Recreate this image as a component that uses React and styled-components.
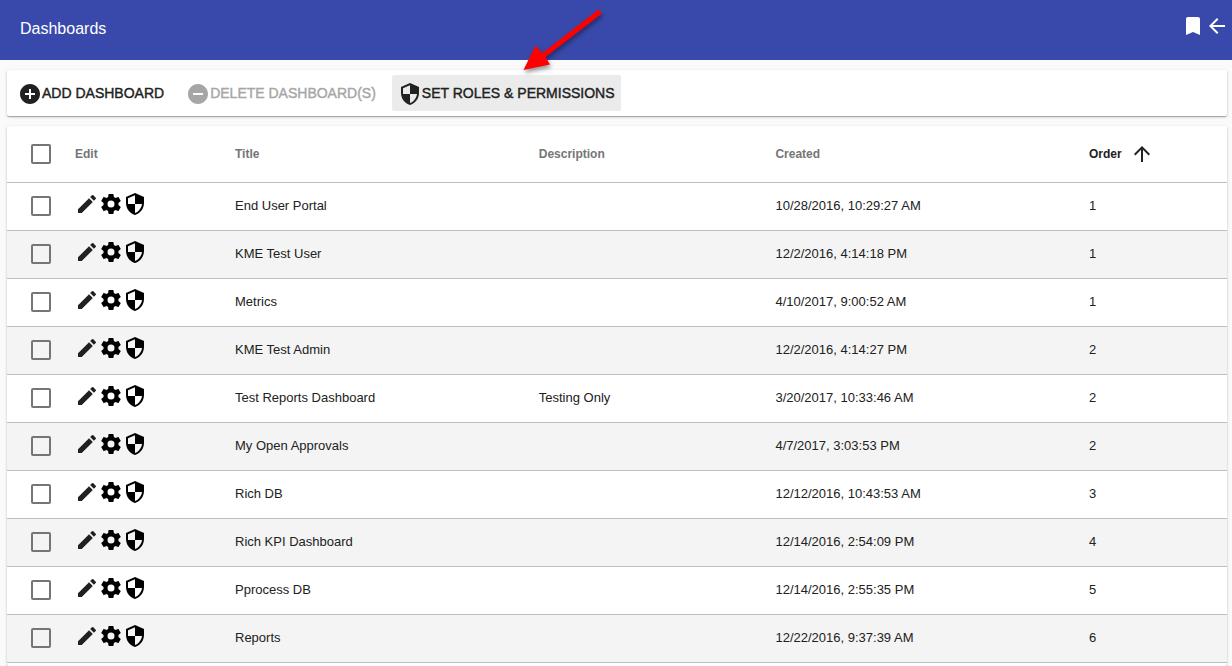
import React from 'react';
import styled, { createGlobalStyle } from 'styled-components';
import {
  MdAddCircle,
  MdArrowBack,
  MdArrowUpward,
  MdBookmark,
  MdEdit,
  MdRemoveCircle,
} from 'react-icons/md';

const dashboards = [
  { title: 'End User Portal', description: '', created: '10/28/2016, 10:29:27 AM', order: 1 },
  { title: 'KME Test User', description: '', created: '12/2/2016, 4:14:18 PM', order: 1 },
  { title: 'Metrics', description: '', created: '4/10/2017, 9:00:52 AM', order: 1 },
  { title: 'KME Test Admin', description: '', created: '12/2/2016, 4:14:27 PM', order: 2 },
  { title: 'Test Reports Dashboard', description: 'Testing Only', created: '3/20/2017, 10:33:46 AM', order: 2 },
  { title: 'My Open Approvals', description: '', created: '4/7/2017, 3:03:53 PM', order: 2 },
  { title: 'Rich DB', description: '', created: '12/12/2016, 10:43:53 AM', order: 3 },
  { title: 'Rich KPI Dashboard', description: '', created: '12/14/2016, 2:54:09 PM', order: 4 },
  { title: 'Pprocess DB', description: '', created: '12/14/2016, 2:55:35 PM', order: 5 },
  { title: 'Reports', description: '', created: '12/22/2016, 9:37:39 AM', order: 6 },
];

function ShieldIcon() {
  return (
    <svg viewBox="0 0 24 24" fill="currentColor" aria-hidden="true">
      <path d="M12 1L3 5v6c0 5.55 3.84 10.74 9 12 5.16-1.26 9-6.45 9-12V5l-9-4zm0 10.99h7c-.53 4.12-3.28 7.79-7 8.94V12H5V6.3l7-3.11v8.8z" />
    </svg>
  );
}

function GearIcon() {
  return (
    <svg viewBox="0 0 24 24" fill="currentColor" aria-hidden="true">
      <path d="M12 15.5A3.5 3.5 0 0 1 8.5 12 3.5 3.5 0 0 1 12 8.5a3.5 3.5 0 0 1 3.5 3.5 3.5 3.5 0 0 1-3.5 3.5m7.43-2.53c.04-.32.07-.64.07-.97s-.03-.66-.07-1l2.11-1.63c.19-.15.24-.42.12-.64l-2-3.46c-.12-.22-.39-.31-.61-.22l-2.49 1c-.52-.39-1.06-.73-1.69-.98l-.37-2.65A.506.506 0 0 0 14 2h-4c-.25 0-.46.18-.5.42l-.37 2.65c-.63.25-1.17.59-1.69.98l-2.49-1c-.22-.09-.49 0-.61.22l-2 3.46c-.13.22-.07.49.12.64L4.57 11c-.04.34-.07.67-.07 1s.03.65.07.97l-2.11 1.66c-.19.15-.25.42-.12.64l2 3.46c.12.22.39.3.61.22l2.49-1.01c.52.4 1.06.74 1.69.99l.37 2.65c.04.24.25.42.5.42h4c.25 0 .46-.18.5-.42l.37-2.65c.63-.26 1.17-.59 1.69-.99l2.49 1.01c.22.08.49 0 .61-.22l2-3.46c.12-.22.07-.49-.12-.64z" />
    </svg>
  );
}

function App() {
  return (
    <Page>
      <GlobalStyle />
      <Header>
        <h1>Dashboards</h1>
        <div className="header__actions">
          <IconButton aria-label="Bookmark">
            <MdBookmark />
          </IconButton>
          <IconButton aria-label="Back">
            <MdArrowBack />
          </IconButton>
        </div>
      </Header>

      <Content>
        <Toolbar>
          <ToolbarButton>
            <MdAddCircle />
            <span>ADD DASHBOARD</span>
          </ToolbarButton>
          <ToolbarButton disabled>
            <MdRemoveCircle />
            <span>DELETE DASHBOARD(S)</span>
          </ToolbarButton>
          <ToolbarButton $active>
            <ShieldIcon />
            <span>SET ROLES &amp; PERMISSIONS</span>
            <Pointer viewBox="0 0 90 72" aria-hidden="true">
              <path d="M78.500 3.500L22.500 47L15.500 39.500L3.500 64L30 58.500L25.500 51L82 7.500z" />
            </Pointer>
          </ToolbarButton>
        </Toolbar>

        <TableCard>
          <Table>
            <thead>
              <tr>
                <HeadCell $width="68px">
                  <Checkbox type="checkbox" aria-label="Select all" />
                </HeadCell>
                <HeadCell $width="160px">Edit</HeadCell>
                <HeadCell $width="24.9%">Title</HeadCell>
                <HeadCell $width="19.4%">Description</HeadCell>
                <HeadCell $width="25.7%">Created</HeadCell>
                <HeadCell $sorted aria-sort="ascending">
                  <div className="sort">
                    Order
                    <MdArrowUpward />
                  </div>
                </HeadCell>
              </tr>
            </thead>
            <tbody>
              {dashboards.map((item) => (
                <Row key={item.title}>
                  <Cell>
                    <Checkbox type="checkbox" aria-label={`Select ${item.title}`} />
                  </Cell>
                  <Cell>
                    <RowActions>
                      <IconButton $soft aria-label="Edit">
                        <MdEdit />
                      </IconButton>
                      <IconButton aria-label="Settings">
                        <GearIcon />
                      </IconButton>
                      <IconButton aria-label="Permissions">
                        <ShieldIcon />
                      </IconButton>
                    </RowActions>
                  </Cell>
                  <Cell>{item.title}</Cell>
                  <Cell>{item.description}</Cell>
                  <Cell>{item.created}</Cell>
                  <Cell>{item.order}</Cell>
                </Row>
              ))}
            </tbody>
          </Table>
        </TableCard>
      </Content>
    </Page>
  );
}

export default App;

const GlobalStyle = createGlobalStyle`
  * {
    box-sizing: border-box;
  }
  body {
    margin: 0;
    background: #fafafa;
    color: #212121;
    font-family: 'Liberation Sans', Arial, sans-serif;
  }
  button {
    border: 0;
    background: none;
    color: inherit;
    font-family: inherit;
    cursor: pointer;
  }
  svg {
    display: block;
    flex: none;
    width: 24px;
    height: 24px;
  }
`;

const Page = styled.div`
  display: flex;
  flex-direction: column;
  min-height: 100vh;
`;

const Header = styled.header`
  display: flex;
  align-items: center;
  justify-content: space-between;
  height: 60px;
  padding: 0 3px 2px 20px;
  background: #3949ab;
  color: #fff;
  h1 {
    margin: 0;
    font-size: 16px;
    font-weight: 400;
    line-height: 24px;
  }
  .header__actions {
    display: flex;
    padding-bottom: 6px;
  }
`;

const IconButton = styled.button`
  padding: 0;
  width: 24px;
  height: 24px;
  && {
    color: ${({ $soft }) => ($soft ? '#212121' : 'inherit')};
  }
`;

const Content = styled.main`
  display: flex;
  flex: 1;
  flex-direction: column;
  gap: 10px;
  padding: 10px 5px 0 7px;
`;

const Card = styled.section`
  border-radius: 2px;
  background: #fff;
  box-shadow: 0 1px 3px rgba(0, 0, 0, 0.2), 0 1px 1px rgba(0, 0, 0, 0.14),
    0 2px 1px -1px rgba(0, 0, 0, 0.12);
`;

const Toolbar = styled(Card)`
  display: flex;
  gap: 10px;
  padding: 5px;
`;

const ToolbarButton = styled.button`
  position: relative;
  display: flex;
  align-items: center;
  height: 36px;
  padding: 0 6px;
  border-radius: 2px;
  background: ${({ $active }) => ($active ? '#ebebeb' : 'transparent')};
  font-size: 14px;
  line-height: 36px;
  white-space: nowrap;
  -webkit-text-stroke: 0.4px currentColor;
  &:disabled {
    color: #a6a6a6;
    cursor: default;
  }
  svg {
    margin-top: 2px;
  }
`;

// red callout arrow, lies over the header and the toolbar
const Pointer = styled.svg`
  && {
    position: absolute;
    left: 128px;
    bottom: 33px;
    width: 90px;
    height: 72px;
    margin: 0;
  }
  fill: #fe0000;
  filter: drop-shadow(1px 3px 2px rgba(0, 0, 0, 0.4));
  pointer-events: none;
`;

const TableCard = styled(Card)`
  flex: 1;
`;

const Table = styled.table`
  width: 100%;
  border-collapse: separate;
  border-spacing: 0;
  table-layout: fixed;
`;

const HeadCell = styled.th`
  width: ${({ $width }) => $width || 'auto'};
  height: 56px;
  padding: 0;
  color: ${({ $sorted }) => ($sorted ? '#212121' : '#757575')};
  font-size: 12px;
  font-weight: 700;
  text-align: left;
  .sort {
    display: flex;
    align-items: center;
    gap: 8px;
  }
`;

const Cell = styled.td`
  height: 48px;
  padding: 0 0 2px;
  border-top: 1px solid #bdbdbd;
  font-size: 13px;
`;

const Row = styled.tr`
  &:nth-child(even) {
    background: #f4f4f4;
  }
  &:last-child ${Cell} {
    height: 49px;
    border-bottom: 1px solid #bdbdbd;
  }
`;

const RowActions = styled.div`
  display: flex;
  padding-bottom: 4px;
  color: #000;
`;

const Checkbox = styled.input`
  appearance: none;
  display: block;
  width: 20px;
  height: 20px;
  margin: 0 0 0 24px;
  border: 2px solid #757575;
  border-radius: 2px;
  &:checked {
    background: #3949ab;
    border-color: #3949ab;
  }
`;
